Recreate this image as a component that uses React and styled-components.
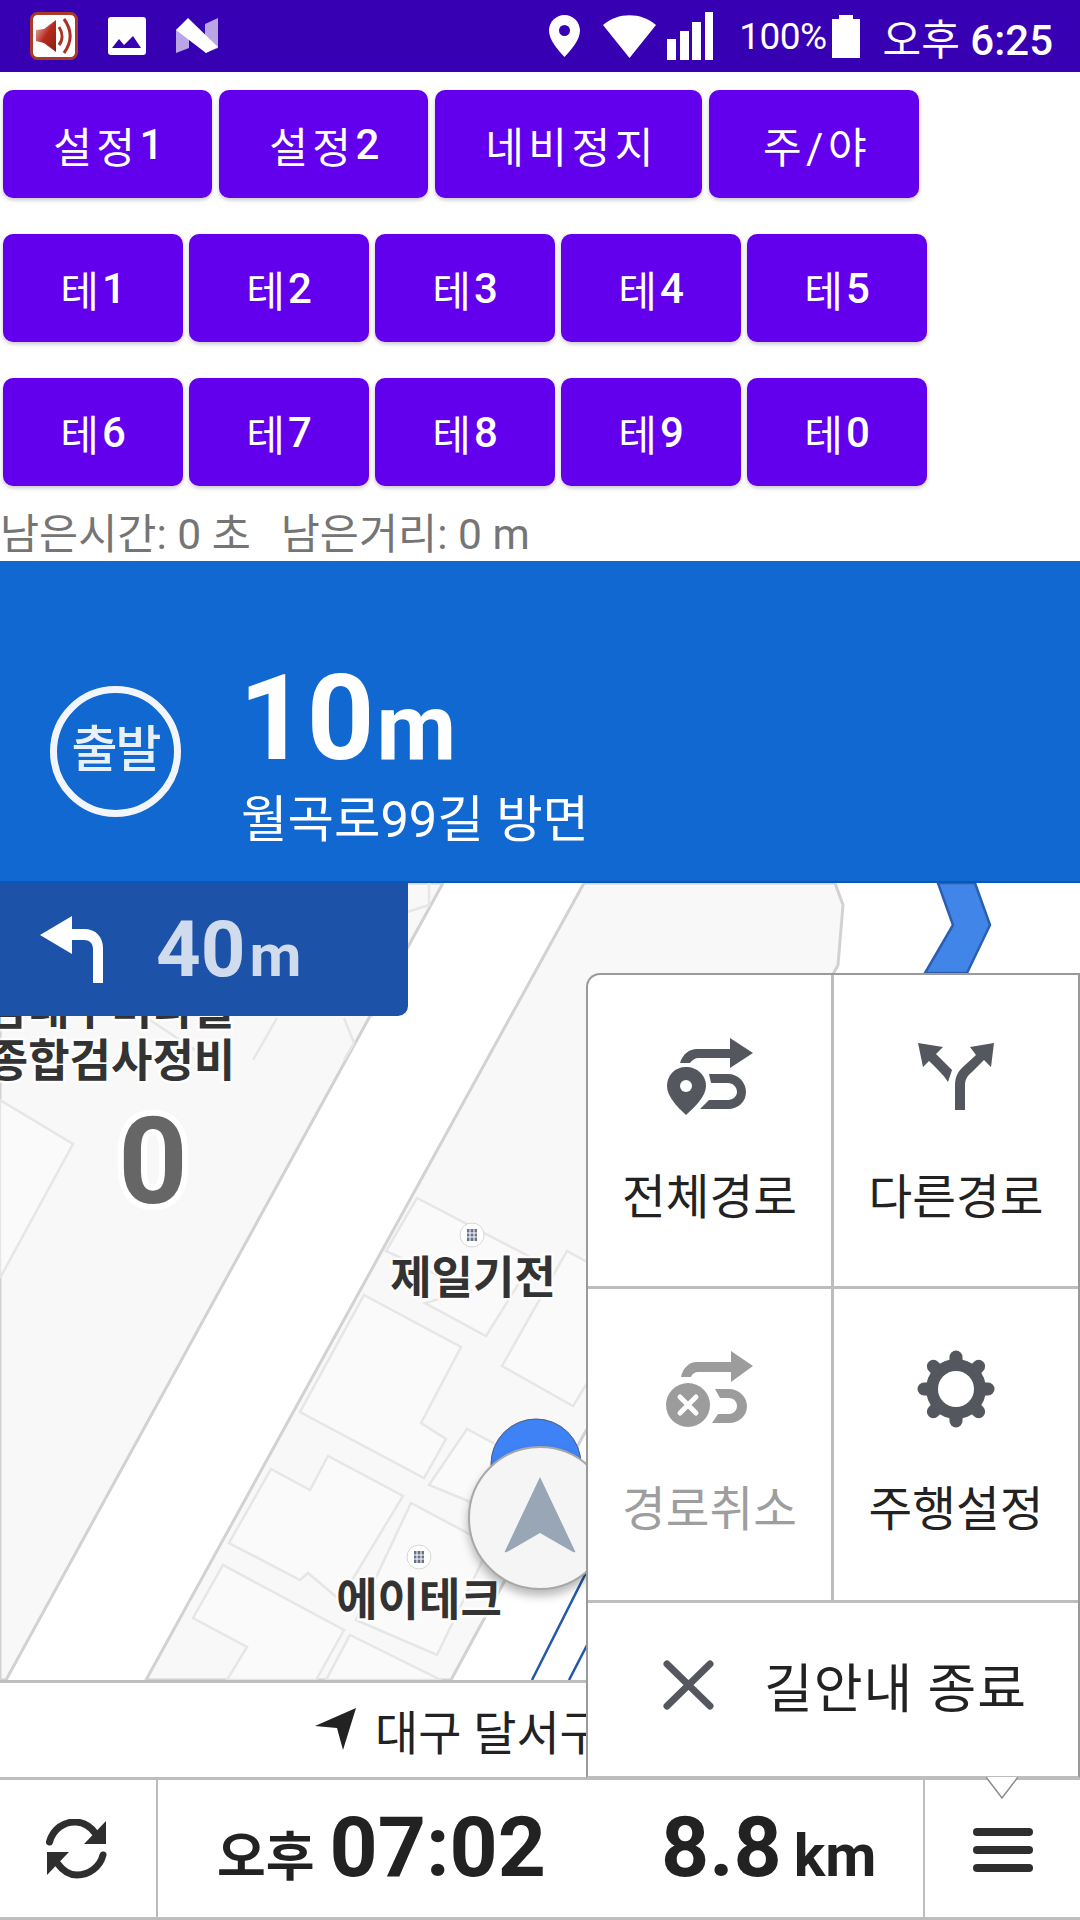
import React from 'react'
import styled, { createGlobalStyle } from 'styled-components'

const FONT = `Roboto, "Noto Sans CJK KR", sans-serif`

const GlobalStyle = createGlobalStyle`
  html, body {
    margin: 0;
    padding: 0;
    background: #fff;
  }
  body {
    font-family: ${FONT};
  }
`

const topButtons = [
  { label: '설정', digit: '1', width: 209 },
  { label: '설정', digit: '2', width: 209 },
  { label: '네비정지', digit: '', width: 267 },
  { label: '주/야', digit: '', width: 210 },
]
const themeRows = [
  ['1', '2', '3', '4', '5'],
  ['6', '7', '8', '9', '0'],
]

function SpeakerIcon() {
  return (
    <svg width="48" height="48" viewBox="0 0 48 48">
      <defs>
        <linearGradient id="spk" x1="0" y1="0" x2="1" y2="1">
          <stop offset="0" stopColor="#f0c8c0" />
          <stop offset="0.5" stopColor="#b42a1e" />
          <stop offset="1" stopColor="#8c1c12" />
        </linearGradient>
      </defs>
      <rect x="1.5" y="1.5" width="45" height="45" rx="6" fill="#fff" stroke="#a83a28" strokeWidth="3" />
      <path d="M6 18 L14 17 L26 8 V40 L14 31 L6 29 Z" fill="url(#spk)" />
      <path d="M29 15 C33 21 33 28 29 33" fill="none" stroke="#ad3025" strokeWidth="3" />
      <path d="M34 7 C42 18 42 30 34 41" fill="none" stroke="#ad3025" strokeWidth="3" />
    </svg>
  )
}

function GalleryIcon() {
  return (
    <svg width="38" height="38" viewBox="0 0 38 38">
      <rect width="38" height="38" rx="3" fill="#fff" />
      <path d="M4 31 L11 22 L16 28 L25 19 L33 31 Z" fill="#3700b3" />
    </svg>
  )
}

function NIcon() {
  return (
    <svg width="42" height="36" viewBox="0 0 42 36">
      <path d="M0 12 L13 2 V30 L0 35 Z" fill="#b9a5e6" />
      <path d="M29 6 L42 0 V30 L29 35 Z" fill="#b9a5e6" />
      <path d="M0 12 L12 0 L42 29 L30 35 Z" fill="#fff" />
    </svg>
  )
}

function PinIcon() {
  return (
    <svg width="31" height="42" viewBox="0 0 31 42">
      <path fillRule="evenodd" d="M15.5 0 C24 0 31 7 31 15.5 C31 25 22 35 15.5 42 C9 35 0 25 0 15.5 C0 7 7 0 15.5 0 Z M15.5 10 A5.5 5.5 0 1 0 15.5 21 A5.5 5.5 0 1 0 15.5 10 Z" fill="#fff" />
    </svg>
  )
}

function WifiIcon() {
  return (
    <svg width="53" height="43" viewBox="0 0 53 43">
      <path d="M0 10 C15 -3 38 -3 53 10 L26.5 43 Z" fill="#fff" />
    </svg>
  )
}

function SignalIcon() {
  return (
    <svg width="46" height="48" viewBox="0 0 46 48">
      <rect x="0" y="27" width="9" height="21" fill="#fff" />
      <rect x="13" y="19" width="9" height="29" fill="#fff" />
      <rect x="25" y="10" width="9" height="38" fill="#fff" />
      <rect x="38" y="0" width="8" height="48" fill="#fff" />
    </svg>
  )
}

function BatteryIcon() {
  return (
    <svg width="28" height="43" viewBox="0 0 28 43">
      <path d="M7 0 H21 V4 H28 V43 H0 V4 H7 Z" fill="#fff" />
    </svg>
  )
}

function RouteIcon() {
  return (
    <svg width="86" height="78" viewBox="0 0 86 78">
      <path d="M13 25 C16 16 22 11 30 11 H63 V0 L86 15 L63 30 V20 H32 C28 20 25 22 23 25 Z" fill="#54585e" />
      <path d="M19 29 C30 29 39 37 39 48 C39 58 28 69 19 77 C10 69 0 58 0 48 C0 37 8 29 19 29 Z" fill="#54585e" />
      <circle cx="19" cy="48" r="6" fill="#fff" />
      <path d="M42 36 H61 C71 36 79 44 79 54 C79 64 71 71 61 71 H33 L42 62 H61 C66 62 70 58 70 54 C70 49 66 45 61 45 H44 Z" fill="#54585e" />
    </svg>
  )
}

function BranchIcon() {
  return (
    <svg width="76" height="68" viewBox="0 0 76 68">
      <path d="M37 67 V42 C37 34 40 28 46 23 L58 12 L52 4 L76 0 L73 24 L66 17 L54 29 C49 33 47 37 47 42 V67 Z" fill="#54585e" />
      <path d="M0 0 L25 4 L18 11 L34 27 L30 39 C25 31 18 25 11 18 L5 24 Z" fill="#54585e" />
    </svg>
  )
}

function RouteCancelIcon() {
  return (
    <svg width="88" height="76" viewBox="0 0 88 76">
      <path d="M15 26 C17 17 23 11 31 11 H65 V0 L87 15 L65 31 V21 H33 C29 21 26 23 25 26 Z" fill="#9c9c9c" />
      <circle cx="22" cy="54" r="22" fill="#9c9c9c" />
      <path d="M14 46 L30 62 M30 46 L14 62" stroke="#fff" strokeWidth="5" strokeLinecap="round" />
      <path d="M49 38 H63 C73 38 81 46 81 55 C81 65 73 72 63 72 H46 L52 63 H63 C68 63 71 59 71 55 C71 51 68 47 63 47 H54 Z" fill="#9c9c9c" />
    </svg>
  )
}

function GearIcon() {
  return (
    <svg width="78" height="78" viewBox="-39 -39 78 78">
      <circle r="30" fill="#54585e" />
      {[0, 45, 90, 135, 180, 225, 270, 315].map((a) => (
        <line key={a} x1="0" y1="-24" x2="0" y2="-32" stroke="#54585e" strokeWidth="13" strokeLinecap="round" transform={`rotate(${a})`} />
      ))}
      <circle r="18" fill="#fff" />
    </svg>
  )
}

function CloseIcon() {
  return (
    <svg width="51" height="50" viewBox="0 0 51 50">
      <path d="M4 4 L47 46 M47 4 L4 46" stroke="#54585e" strokeWidth="7" strokeLinecap="round" />
    </svg>
  )
}

function RefreshIcon() {
  return (
    <svg width="62" height="60" viewBox="0 0 62 60">
      <path d="M3.5 23 C7 10 18 2.5 30 3 C38 3.5 44 7 49 14" fill="none" stroke="#2e2e2e" strokeWidth="7" strokeLinecap="round" />
      <path d="M60 2 V25 H38 Z" fill="#2e2e2e" />
      <path d="M57 36 C54 48 43 56 31 56 C23 56 17 52 12 45" fill="none" stroke="#2e2e2e" strokeWidth="7" strokeLinecap="round" />
      <path d="M1 33 H23 L1 56 Z" fill="#2e2e2e" />
    </svg>
  )
}

function TurnLeftIcon() {
  return (
    <svg width="64" height="68" viewBox="0 0 64 68">
      <path d="M32 0 V13 H44 C56 13 63 21 63 32 V67 H53 V33 C53 27 49 24 44 24 H32 V38 L0 19 Z" fill="#fff" />
    </svg>
  )
}

function BuildingIcon() {
  return (
    <svg width="26" height="26" viewBox="0 0 26 26">
      <circle cx="13" cy="13" r="12" fill="#fff" stroke="#d8d8d0" />
      <rect x="8" y="7" width="10" height="12" fill="#68728a" />
      <path d="M11 7 V19 M15 7 V19 M8 11 H18 M8 15 H18" stroke="#fff" strokeWidth="1" />
    </svg>
  )
}

function MapDrawing() {
  return (
    <MapSvg viewBox="0 883 1080 797">
      <rect x="0" y="883" width="1080" height="797" fill="#fff" />
      {/* left block */}
      <path d="M0 883 H443 L6 1680 H0 Z" fill="#f8f8f8" stroke="#d2d2d2" strokeWidth="3" />
      {/* middle block */}
      <path d="M584 883 H835 L843 905 L838 965 L451 1680 H146 Z" fill="#f8f8f8" stroke="#d2d2d2" strokeWidth="3" />
      <g fill="#fafafa" stroke="#e6e6e6" strokeWidth="2.5">
        <path d="M0 1100 L73 1144 L0 1278 Z" />
        <path d="M417 1198 L534 1259 L486 1336 L425 1303 L470 1290 L386 1251 Z" />
        <path d="M364 1295 L461 1347 L421 1423 L446 1439 L424 1478 L300 1412 Z" />
        <path d="M502 1366 L567 1251 L620 1280 L620 1330 L573 1406 Z" />
        <path d="M467 1429 L510 1452 L490 1510 L429 1485 Z" />
        <path d="M271 1469 L310 1490 L328 1456 L403 1496 L340 1600 L308 1573 L300 1580 L229 1543 Z" />
        <path d="M411 1503 L490 1545 L437 1655 L356 1620 Z" />
        <path d="M193 1618 L223 1565 L344 1630 L316 1680 H227 L247 1647 Z" />
        <path d="M350 1635 L441 1680 H326 Z" />
      </g>
      <g fill="none" stroke="#e6e6e6" strokeWidth="2.5">
        <path d="M429 905 L407 912 L372 1018" strokeWidth="1" />
        <path d="M429 883 V905 L407 912" />
        <path d="M344 1018 L354 1043 L344 1060" />
        <path d="M277 1018 L253 1060" />
        <path d="M150 1020 L195 1050" />
      </g>
      {/* route */}
      <path d="M938 883 L953 925 L925 973 H967 L990 925 L975 883 Z" fill="#4285e8" stroke="#2a5fb0" strokeWidth="2.5" />
      <path d="M532 1680 L600 1545 M569 1680 L600 1620" fill="none" stroke="#2257ab" strokeWidth="2.5" />
      <circle cx="536" cy="1464" r="45" fill="#3f82f5" stroke="#4a5a78" strokeWidth="1" />
    </MapSvg>
  )
}

export default function App() {
  return (
    <>
      <GlobalStyle />
      <Page>
        <StatusBar>
          <StatusIcons>
            <SpeakerIcon />
            <GalleryIcon />
            <NIcon />
          </StatusIcons>
          <StatusRight>
            <PinIcon />
            <WifiIcon />
            <SignalIcon />
            <BatteryText>100%</BatteryText>
            <BatteryIcon />
            <ClockText>
              오후 <b>6:25</b>
            </ClockText>
          </StatusRight>
        </StatusBar>

        <ButtonPanel>
          <ButtonRow $gap={7}>
            {topButtons.map((b) => (
              <ActionButton key={b.label + b.digit} $width={b.width} $spaced>
                {b.label}
                {b.digit && <b>{b.digit}</b>}
              </ActionButton>
            ))}
          </ButtonRow>
          {themeRows.map((row) => (
            <ButtonRow key={row[0]} $gap={6}>
              {row.map((digit) => (
                <ActionButton key={digit} $width={180}>
                  테<b>{digit}</b>
                </ActionButton>
              ))}
            </ButtonRow>
          ))}
        </ButtonPanel>

        <InfoLine>
          <span>남은시간: 0 초</span>
          <span>남은거리: 0 m</span>
        </InfoLine>

        <GuidePanel>
          <StartBadge>출발</StartBadge>
          <GuideText>
            <GuideDistance>
              10<small>m</small>
            </GuideDistance>
            <GuideRoad>월곡로99길 방면</GuideRoad>
          </GuideText>
        </GuidePanel>

        <MapArea>
          <MapDrawing />
          <MapLabel $x={111} $y={153}>
            남대구미라클
            <br />
            종합검사정비
          </MapLabel>
          <MapNumber>0</MapNumber>
          <PoiMark $x={472} $y={352}>
            <BuildingIcon />
          </PoiMark>
          <MapLabel $x={473} $y={396}>
            제일기전
          </MapLabel>
          <PoiMark $x={419} $y={674}>
            <BuildingIcon />
          </PoiMark>
          <MapLabel $x={419} $y={718}>
            에이테크
          </MapLabel>
          <Puck>
            <svg width="72" height="77" viewBox="0 0 72 77">
              <path d="M36 1 L71 75 Q72 77 69 76 L36 57 L3 76 Q0 77 1 75 Z" fill="#98a6b5" />
            </svg>
          </Puck>
          <NextTurn>
            <TurnLeftIcon />
            <NextDistance>
              40<small>m</small>
            </NextDistance>
          </NextTurn>
        </MapArea>

        <AddressBar>
          <svg width="41" height="42" viewBox="0 0 41 42">
            <path d="M41 0 L28 42 L22 20 L0 18 Z" fill="#222" />
          </svg>
          <AddressText>대구 달서구 월곡로 99길</AddressText>
        </AddressBar>

        <BottomBar>
          <RefreshCell>
            <RefreshIcon />
          </RefreshCell>
          <SummaryCell>
            <ArrivalTime>
              <small>오후</small>
              07:02
            </ArrivalTime>
            <TotalDistance>
              8.8<small>km</small>
            </TotalDistance>
          </SummaryCell>
          <MenuCell>
            <MenuBar />
            <MenuBar />
            <MenuBar />
          </MenuCell>
        </BottomBar>

        <MenuPopup>
          <MenuGrid>
            <MenuItem>
              <IconSlot>
                <RouteIcon />
              </IconSlot>
              <MenuLabel>전체경로</MenuLabel>
            </MenuItem>
            <MenuItem>
              <IconSlot>
                <BranchIcon />
              </IconSlot>
              <MenuLabel>다른경로</MenuLabel>
            </MenuItem>
            <MenuItem>
              <IconSlot>
                <RouteCancelIcon />
              </IconSlot>
              <MenuLabel $disabled>경로취소</MenuLabel>
            </MenuItem>
            <MenuItem>
              <IconSlot>
                <GearIcon />
              </IconSlot>
              <MenuLabel>주행설정</MenuLabel>
            </MenuItem>
          </MenuGrid>
          <EndGuide>
            <CloseIcon />
            <EndLabel>길안내 종료</EndLabel>
          </EndGuide>
          <PopupTail viewBox="0 0 32 22" width="32" height="22">
            <path d="M0 0 L16 21 L32 0" fill="#fff" stroke="#8c8c8c" strokeWidth="1.5" />
          </PopupTail>
        </MenuPopup>
      </Page>
    </>
  )
}

const Page = styled.div`
  position: relative;
  width: 1080px;
  height: 1920px;
  display: flex;
  flex-direction: column;
  overflow: hidden;
  background: #fff;
`
const StatusBar = styled.div`
  height: 72px;
  flex: none;
  background: #3700b3;
  color: #fff;
  display: flex;
  align-items: center;
  justify-content: space-between;
  padding: 0 27px 0 30px;
`
const StatusIcons = styled.div`
  display: flex;
  align-items: center;
  gap: 30px;
  height: 100%;
`
const StatusRight = styled.div`
  display: flex;
  align-items: center;
  height: 100%;
  svg:nth-child(1) {
    margin-right: 23px;
  }
  svg:nth-child(2) {
    margin-right: 11px;
  }
  svg:nth-child(3) {
    margin: 0 26px 0 0;
  }
`
const BatteryText = styled.span`
  font-size: 37px;
  letter-spacing: -0.5px;
  margin-right: 5px;
`
const ClockText = styled.span`
  font-size: 42px;
  margin-left: 23px;
  white-space: nowrap;
  b {
    font-weight: 500;
  }
`
const ButtonPanel = styled.div`
  display: flex;
  flex-direction: column;
  gap: 36px;
  padding: 18px 0 0 3px;
`
const ButtonRow = styled.div`
  display: flex;
  gap: ${(p) => p.$gap}px;
`
const ActionButton = styled.div`
  width: ${(p) => p.$width}px;
  height: 108px;
  box-sizing: border-box;
  border-radius: 10px;
  background: #6200ee;
  color: #fff;
  font-size: 42px;
  font-weight: 400;
  letter-spacing: ${(p) => (p.$spaced ? 4.5 : 3)}px;
  padding-left: ${(p) => (p.$spaced ? 6 : 3)}px;
  display: flex;
  align-items: center;
  justify-content: center;
  box-shadow: 0 2px 4px rgba(0, 0, 0, 0.22);
  b {
    font-weight: 500;
  }
`
const InfoLine = styled.div`
  height: 75px;
  flex: none;
  box-sizing: border-box;
  padding: 24px 0 0 0;
  display: flex;
  gap: 30px;
  color: #757575;
  font-size: 42.5px;
  line-height: 50px;
  white-space: nowrap;
`
const GuidePanel = styled.div`
  height: 322px;
  flex: none;
  box-sizing: border-box;
  background: #1068d0;
  border-bottom: 2px solid #0a58b4;
  color: #fff;
  display: flex;
  align-items: flex-start;
  padding: 125px 0 0 50px;
  gap: 58px;
`
const StartBadge = styled.div`
  width: 131px;
  height: 131px;
  box-sizing: border-box;
  border: 7px solid #f2f6fc;
  border-radius: 50%;
  display: flex;
  align-items: center;
  justify-content: center;
  padding-bottom: 14px;
  font-size: 50px;
  font-weight: 500;
  letter-spacing: -2px;
  color: #e8f0fa;
`
const GuideText = styled.div`
  display: flex;
  flex-direction: column;
  margin-top: -37px;
`
const GuideDistance = styled.div`
  font-size: 118px;
  line-height: 140px;
  font-weight: 700;
  white-space: nowrap;
  small {
    font-size: 92px;
    margin-left: 2px;
  }
`
const GuideRoad = styled.div`
  font-size: 50.5px;
  line-height: 60px;
  white-space: nowrap;
  margin: -8px 0 0 2px;
`
const MapArea = styled.div`
  flex: 1;
  position: relative;
  overflow: hidden;
`
const MapSvg = styled.svg`
  position: absolute;
  inset: 0;
  width: 100%;
  height: 100%;
`
const MapLabel = styled.div`
  position: absolute;
  left: ${(p) => p.$x}px;
  top: ${(p) => p.$y}px;
  transform: translate(-50%, -50%);
  font-size: 45px;
  line-height: 52px;
  font-weight: 700;
  color: #333;
  text-align: center;
  white-space: nowrap;
  -webkit-text-stroke: 5px rgba(255, 255, 255, 0.8);
  paint-order: stroke fill;
`
const MapNumber = styled.div`
  position: absolute;
  left: 153px;
  top: 279px;
  transform: translate(-50%, -50%);
  font-size: 121px;
  line-height: 130px;
  font-weight: 700;
  color: #666;
  -webkit-text-stroke: 12px #fff;
  paint-order: stroke fill;
`
const PoiMark = styled.div`
  position: absolute;
  left: ${(p) => p.$x}px;
  top: ${(p) => p.$y}px;
  transform: translate(-50%, -50%);
  line-height: 0;
`
const Puck = styled.div`
  position: absolute;
  left: 468px;
  top: 563px;
  width: 144px;
  height: 144px;
  box-sizing: border-box;
  border: 2px solid #a8a8a8;
  border-radius: 50%;
  background: #f5f5f5;
  box-shadow: 0 6px 10px rgba(0, 0, 0, 0.28);
  display: flex;
  align-items: center;
  justify-content: center;
  padding-bottom: 8px;
`
const NextTurn = styled.div`
  position: absolute;
  left: 0;
  top: 0;
  width: 408px;
  height: 133px;
  box-sizing: border-box;
  background: #1c52a8;
  border-bottom-right-radius: 10px;
  display: flex;
  align-items: center;
  padding-left: 40px;
  gap: 52px;
`
const NextDistance = styled.div`
  font-size: 78px;
  font-weight: 700;
  color: #d0dbee;
  white-space: nowrap;
  small {
    font-size: 60px;
    margin-left: 4px;
  }
`
const AddressBar = styled.div`
  height: 97px;
  flex: none;
  box-sizing: border-box;
  border-top: 3px solid #bdbdbd;
  display: flex;
  align-items: center;
  padding: 0 0 2px 315px;
  gap: 19px;
  color: #222;
  white-space: nowrap;
`
const AddressText = styled.span`
  font-size: 47px;
`
const BottomBar = styled.div`
  height: 143px;
  flex: none;
  box-sizing: border-box;
  border-top: 3px solid #bdbdbd;
  border-bottom: 3px solid #bdbdbd;
  display: flex;
  color: #222;
`
const RefreshCell = styled.div`
  width: 158px;
  box-sizing: border-box;
  border-right: 2px solid #bdbdbd;
  display: flex;
  align-items: center;
  justify-content: center;
  padding-right: 2px;
`
const SummaryCell = styled.div`
  flex: 1;
  display: flex;
  align-items: baseline;
  padding: 18px 0 0 59px;
  font-weight: 700;
`
const ArrivalTime = styled.div`
  font-size: 84px;
  white-space: nowrap;
  small {
    font-size: 53px;
    margin-right: 15px;
  }
`
const TotalDistance = styled.div`
  font-size: 84px;
  white-space: nowrap;
  margin-left: 115px;
  small {
    font-size: 59px;
    margin-left: 12px;
  }
`
const MenuCell = styled.div`
  width: 157px;
  box-sizing: border-box;
  border-left: 2px solid #bdbdbd;
  display: flex;
  flex-direction: column;
  align-items: center;
  justify-content: center;
  gap: 10px;
  padding-top: 2px;
`
const MenuBar = styled.div`
  width: 60px;
  height: 8px;
  border-radius: 4px;
  background: #2e2e2e;
`
const MenuPopup = styled.div`
  position: absolute;
  left: 586px;
  top: 973px;
  width: 494px;
  height: 805px;
  box-sizing: border-box;
  background: #fff;
  border: 2px solid #9a9a9a;
  border-bottom-color: #bdbdbd;
  border-top-left-radius: 14px;
  display: flex;
  flex-direction: column;
`
const MenuGrid = styled.div`
  display: grid;
  grid-template-columns: 246px 1fr;
  grid-template-rows: 314px 314px;
  flex: none;
`
const MenuItem = styled.div`
  display: flex;
  flex-direction: column;
  align-items: center;
  box-sizing: border-box;
  border-bottom: 3px solid #bdbdbd;
  padding-top: 62px;
  &:nth-child(odd) {
    border-right: 3px solid #bdbdbd;
  }
  &:nth-child(n + 3) {
    padding-top: 60px;
  }
`
const IconSlot = styled.div`
  height: 80px;
  display: flex;
  align-items: center;
  justify-content: center;
`
const MenuLabel = styled.div`
  margin-top: 51px;
  font-size: 47.5px;
  line-height: 60px;
  color: ${(p) => (p.$disabled ? '#9e9e9e' : '#222')};
  white-space: nowrap;
`
const EndGuide = styled.div`
  flex: 1;
  display: flex;
  align-items: center;
  padding-left: 75px;
  gap: 50px;
  padding-bottom: 10px;
`
const EndLabel = styled.div`
  font-size: 53px;
  letter-spacing: 1px;
  color: #222;
  white-space: nowrap;
`
const PopupTail = styled.svg`
  position: absolute;
  left: 398px;
  bottom: -23px;
`
